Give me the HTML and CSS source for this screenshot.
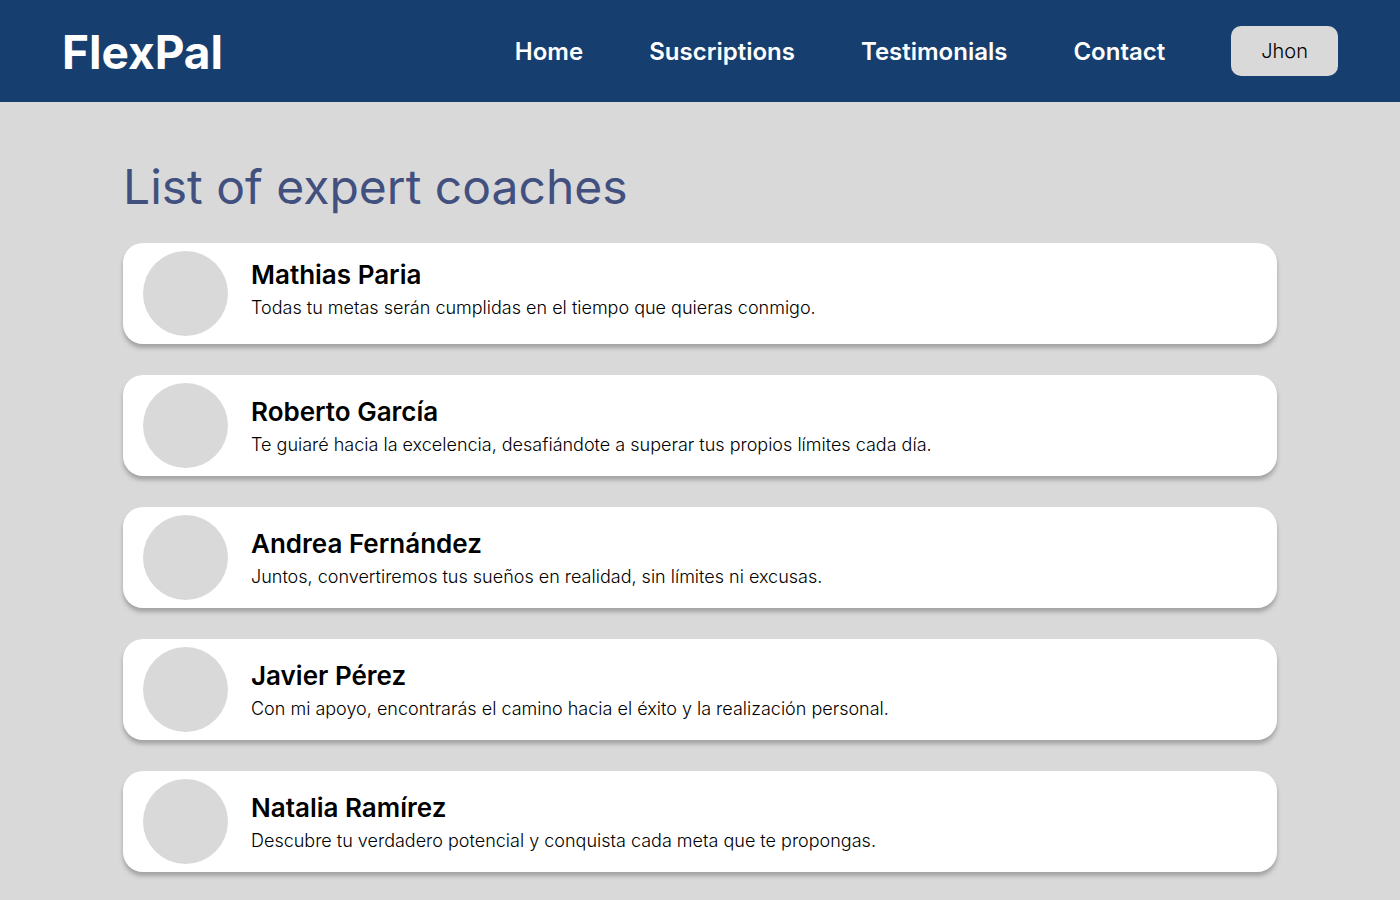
FILE: index.html
```html
<!DOCTYPE html>
<html lang="es">
<head>
<meta charset="utf-8">
<meta name="viewport" content="width=device-width, initial-scale=1">
<title>FlexPal</title>
<link rel="stylesheet" href="styles.css">
</head>
<body>
<header class="header">
  <a class="logo" href="#">FlexPal</a>
  <nav class="nav">
    <a href="#">Home</a>
    <a href="#">Suscriptions</a>
    <a href="#">Testimonials</a>
    <a href="#">Contact</a>
    <button class="user" type="button">Jhon</button>
  </nav>
</header>
<main class="main">
  <h1 class="title">List of expert coaches</h1>
  <ul class="coaches">
    <li class="coach coach-first"><span class="avatar"></span><div class="info"><h2 class="name">Mathias Paria</h2><p class="quote">Todas tu metas serán cumplidas en el tiempo que quieras conmigo.</p></div></li>
    <li class="coach"><span class="avatar"></span><div class="info"><h2 class="name">Roberto García</h2><p class="quote">Te guiaré hacia la excelencia, desafiándote a superar tus propios límites cada día.</p></div></li>
    <li class="coach"><span class="avatar"></span><div class="info"><h2 class="name">Andrea Fernández</h2><p class="quote">Juntos, convertiremos tus sueños en realidad, sin límites ni excusas.</p></div></li>
    <li class="coach"><span class="avatar"></span><div class="info"><h2 class="name">Javier Pérez</h2><p class="quote">Con mi apoyo, encontrarás el camino hacia el éxito y la realización personal.</p></div></li>
    <li class="coach"><span class="avatar"></span><div class="info"><h2 class="name">Natalia Ramírez</h2><p class="quote">Descubre tu verdadero potencial y conquista cada meta que te propongas.</p></div></li>
  </ul>
</main>
</body>
</html>
```
FILE: styles.css
```css
* { box-sizing: border-box; margin: 0; padding: 0; }
body { background: #d9d9d9; color: #000; font-family: Inter, "Liberation Sans", sans-serif; }
.header { display: flex; align-items: center; justify-content: space-between; padding: 21px 62px; background: #163e6e; }
.logo { padding-top: 2px; color: #fff; font-size: 46px; line-height: 58px; font-weight: 700; text-decoration: none; }
.nav { display: flex; align-items: center; gap: 66px; }
.nav a { padding-top: 2px; color: #fff; font-size: 24px; line-height: 32px; font-weight: 600; text-decoration: none; }
.user { padding: 10px 30px; border: 0; border-radius: 10px; background: #d9d9d9; color: #000; font: 300 20px/30px Inter, "Liberation Sans", sans-serif; }
.main { padding: 56px 123px 28px; }
.title { margin-bottom: 27px; color: #42507f; font-size: 48px; line-height: 58px; font-weight: 400; }
.coaches { display: flex; flex-direction: column; gap: 31px; list-style: none; }
.coach { display: flex; align-items: center; gap: 23px; padding: 8px 20px; border-radius: 20px; background: #fff; box-shadow: 0 4px 4px rgba(0, 0, 0, 0.25); }
.info { padding-top: 2px; }
.coach-first .info { padding: 0 0 8px; }
.avatar { flex: none; width: 85px; height: 85px; border-radius: 50%; background: #d9d9d9; }
.name { margin-bottom: 4px; font-size: 26px; line-height: 32px; font-weight: 600; }
.quote { font-size: 18px; line-height: 26px; font-weight: 300; }
```
